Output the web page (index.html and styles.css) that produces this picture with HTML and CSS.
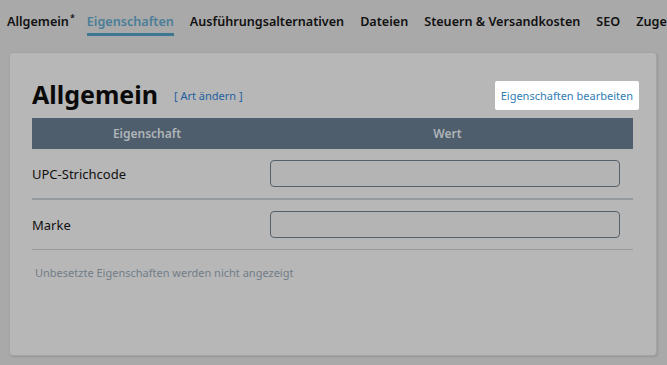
FILE: index.html
```html
<!DOCTYPE html>
<html lang="de">
<head>
<meta charset="utf-8">
<link rel="stylesheet" href="styles.css">
</head>
<body>
<nav class="tabs">
  <span class="tab first">Allgemein<sup>*</sup></span>
  <span class="tab active">Eigenschaften</span>
  <span class="tab">Ausführungsalternativen</span>
  <span class="tab">Dateien</span>
  <span class="tab">Steuern &amp; Versandkosten</span>
  <span class="tab">SEO</span>
  <span class="tab last">Zugehörige Artikel</span>
</nav>
<main class="card">
  <div class="head">
    <h1 class="title">Allgemein</h1>
    <a class="change">[ Art ändern ]</a>
    <a class="edit">Eigenschaften bearbeiten</a>
  </div>
  <div class="table">
    <div class="thead">
      <div class="th">Eigenschaft</div>
      <div class="th">Wert</div>
    </div>
    <div class="row thick">
      <div class="label">UPC-Strichcode</div>
      <div class="value"><div class="input"></div></div>
    </div>
    <div class="row">
      <div class="label">Marke</div>
      <div class="value"><div class="input"></div></div>
    </div>
  </div>
  <p class="note">Unbesetzte Eigenschaften werden nicht angezeigt</p>
</main>
</body>
</html>
```
FILE: styles.css
```css
html, body {
  margin: 0;
  padding: 0;
  background: #a9a9a9;
  overflow: hidden;
  width: 667px;
  height: 365px;
  font-family: "Noto Sans", "Open Sans", sans-serif;
}
.tabs {
  display: flex;
  gap: 16px;
  padding: 12px 0 0 7px;
  height: 37px;
  box-sizing: border-box;
  white-space: nowrap;
  overflow: hidden;
}
.tab {
  font-size: 12.6px;
  font-weight: 600;
  color: #111;
  line-height: 20px;
  height: 24px;
  box-sizing: border-box;
}
.tab.first {
  margin-right: -4px;
}
.tab.last {
  flex-shrink: 0;
}
.tab sup {
  font-size: 9px;
  line-height: 0;
  vertical-align: 5px;
  margin-left: 1px;
}
.tab.active {
  color: #4a7e98;
  border-bottom: 3px solid #3f7892;
}
.card {
  margin: 15px 10px 0 9px;
  height: 304px;
  box-sizing: border-box;
  background: #b7b7b7;
  border: 1px solid #a2a3a4;
  border-radius: 4px;
  box-shadow: 1px 1px 2px rgba(0,0,0,0.12);
  padding: 28px 23px 0 22px;
}
.head {
  display: flex;
  align-items: center;
  height: 29px;
  margin-bottom: 8px;
}
.title {
  margin: 0;
  font-size: 25px;
  font-weight: 700;
  color: #0a0a0a;
  line-height: 30px;
  position: relative;
  top: -2px;
}
.change {
  font-size: 11px;
  color: #1f5fa0;
  margin-left: 16px;
}
.edit {
  margin-left: auto;
  margin-right: -6px;
  background: #fff;
  color: #2f7db5;
  font-size: 11px;
  padding: 0 6px;
  height: 29px;
  display: flex;
  align-items: center;
  box-sizing: border-box;
  border-radius: 2px;
}
.thead {
  display: grid;
  grid-template-columns: 230px 1fr;
  background: #4f5e6c;
  height: 31px;
  align-items: center;
}
.th {
  text-align: center;
  color: #b0b5ba;
  font-size: 12px;
  font-weight: 600;
}
.row {
  display: grid;
  grid-template-columns: 238px 1fr;
  align-items: center;
  height: 50px;
  border-bottom: 1px solid #98999a;
  box-sizing: border-box;
}
.row.thick {
  border-bottom: 2px solid #979a9d;
  height: 51px;
}
.label {
  font-size: 13px;
  color: #111;
}
.value {
  padding-right: 13px;
}
.input {
  height: 27px;
  box-sizing: border-box;
  border: 1px solid #56606b;
  border-radius: 4px;
  background: #b4b4b4;
}
.note {
  margin: 15px 0 0 3px;
  font-size: 11px;
  color: #727d87;
}
```
